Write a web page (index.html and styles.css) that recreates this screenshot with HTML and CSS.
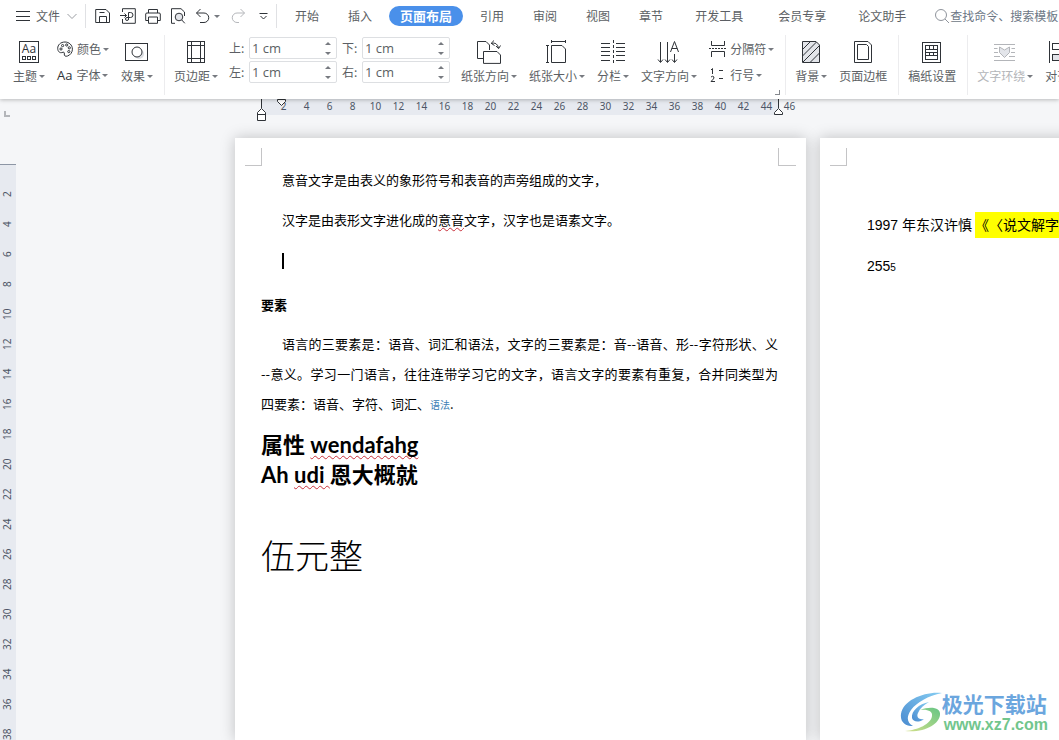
FILE: index.html
```html
<!DOCTYPE html>
<html lang="zh-CN">
<head>
<meta charset="utf-8">
<title>页面布局</title>
<link rel="stylesheet" href="styles.css">
</head>
<body>
<header class="toolbar">
  <nav class="topbar">
    <button class="file" type="button">
      <svg width="14" height="14" viewBox="0 0 14 14"><path d="M0 2.5h14M0 7.5h14M0 11.5h14"/></svg>
      文件
      <svg class="chevron" width="10" height="10" viewBox="0 0 10 10"><path d="M.5 3L5 7.500L9.500 3"/></svg>
    </button>
    <span class="rule"></span>
    <div class="quick">
      <button type="button" aria-label="保存"><svg width="16" height="16" viewBox="0 0 16 16"><path d="M.7 14.500V1.500H11L14.500 5V14.500zM4.500 14V8.500H11.500V14M4.500 4.500H9.500"/></svg></button>
      <button type="button" aria-label="输出为PDF"><svg width="16" height="16" viewBox="0 0 16 16"><path d="M2.500 4V.7H15.300V15.300H2.500V11M0 7.500H6.500M4.500 5.500L6.500 7.500L4.500 9.500M8.500 12V4.500H10.500A2.300 2.300 0 0 1 10.500 9.500H7A1.500 1.500 0 1 0 8.500 11"/></svg></button>
      <button type="button" aria-label="打印"><svg width="16" height="16" viewBox="0 0 16 16"><path d="M3.500 5V1.500H12.500V5M3.500 12.500H.7V6Q.7 5 2 5H14Q15.300 5 15.300 6V12.500H12.500M3.500 9H12.500V15.300H3.500z"/></svg></button>
      <button type="button" aria-label="打印预览"><svg width="16" height="16" viewBox="0 0 16 16"><path d="M5 15.300H1.500V.7H11L14.500 4V8"/><circle class="tint" cx="9" cy="9" r="3.800"/><path d="M11.800 12L14.800 15.300"/></svg></button>
      <button type="button" aria-label="撤销"><svg width="16" height="16" viewBox="0 0 16 16"><path d="M5.500 1L1.500 5L5.500 9M1.500 5H9A4.700 4.700 0 0 1 9 14.500H5"/></svg></button>
      <span class="caret"></span>
      <button class="redo" type="button" aria-label="恢复"><svg width="16" height="16" viewBox="0 0 16 16"><path d="M10.500 1L14.500 5L10.500 9M14.500 5H7A4.700 4.700 0 0 0 7 14.500H9"/></svg></button>
      <button class="more" type="button" aria-label="更多"><svg width="9" height="10" viewBox="0 0 9 10"><path d="M.5 2.500H8.500M1.500 5L4.500 8L7.500 5"/></svg></button>
    </div>
    <span class="rule"></span>
    <div class="tabs">
      <button type="button">开始</button>
      <button type="button">插入</button>
      <button class="active" type="button">页面布局</button>
      <button type="button">引用</button>
      <button type="button">审阅</button>
      <button type="button">视图</button>
      <button type="button">章节</button>
      <button class="wide" type="button">开发工具</button>
      <button class="wide" type="button">会员专享</button>
      <button type="button">论文助手</button>
    </div>
    <label class="search">
      <svg width="16" height="16" viewBox="0 0 16 16"><circle cx="7" cy="7" r="5.500"/><path d="M11 11L15 15"/></svg>
      <input type="text" aria-label="搜索" placeholder="查找命令、搜索模板">
    </label>
  </nav>

  <div class="ribbon">
    <button class="tool" type="button">
      <svg width="24" height="24" viewBox="0 0 24 24"><path class="crisp" d="M2.500 1.500H21.500V22.500H2.500zM5.500 16.500h3v3h-3zM10.500 16.500h3v3h-3zM15.500 16.500h3v3h-3z"/><text x="12" y="13" text-anchor="middle">Aa</text></svg>
      <span class="name">主题<i class="caret"></i></span>
    </button>
    <div class="stack">
      <button class="mini" type="button">
        <svg width="16" height="16" viewBox="0 0 16 16"><path d="M8 1C3.500 1 .7 4 .7 7.300S3 12.300 5 11.500C7 10.800 7.600 11.300 7.300 13C7 15 8.500 15.700 10.500 15C13.500 14 15.400 11.300 15.400 8.200C15.400 4 12 1 8 1z"/><circle cx="4" cy="8" r="1.100"/><circle cx="5.600" cy="4.600" r="1.100"/><circle cx="9.700" cy="4" r="1.100"/><circle cx="12.300" cy="6.800" r="1.100"/><circle cx="11.800" cy="10.600" r="1.100"/></svg>
        <span class="name">颜色<i class="caret"></i></span>
      </button>
      <button class="mini" type="button"><span class="aa">Aa</span><span class="name">字体<i class="caret"></i></span></button>
    </div>
    <button class="tool" type="button">
      <svg width="24" height="24" viewBox="0 0 24 24"><circle class="shade" cx="14" cy="14" r="5"/><path class="crisp" d="M.5 3.500H22.500V20.500H.5z"/><circle class="paper" cx="12" cy="12" r="5"/></svg>
      <span class="name">效果<i class="caret"></i></span>
    </button>
    <span class="divider"></span>
    <button class="tool" type="button">
      <svg width="24" height="24" viewBox="0 0 24 24"><path class="crisp" d="M3.500 1.500H20.500V22.500H3.500zM7.500 1.500V22.500M16.500 1.500V22.500M3.500 5.500H20.500M3.500 18.500H20.500"/></svg>
      <span class="name">页边距<i class="caret"></i></span>
    </button>
    <div class="margins">
      <label for="mt">上:</label>
      <div class="spin"><input id="mt" type="text" value="1 cm"><button type="button" aria-label="增大上边距"></button><button class="down" type="button" aria-label="减小上边距"></button></div>
      <label for="mb">下:</label>
      <div class="spin"><input id="mb" type="text" value="1 cm"><button type="button" aria-label="增大下边距"></button><button class="down" type="button" aria-label="减小下边距"></button></div>
      <label for="ml">左:</label>
      <div class="spin"><input id="ml" type="text" value="1 cm"><button type="button" aria-label="增大左边距"></button><button class="down" type="button" aria-label="减小左边距"></button></div>
      <label for="mr">右:</label>
      <div class="spin"><input id="mr" type="text" value="1 cm"><button type="button" aria-label="增大右边距"></button><button class="down" type="button" aria-label="减小右边距"></button></div>
    </div>
    <button class="tool" type="button">
      <svg width="24" height="24" viewBox="0 0 24 24"><path d="M6 18.500H.5V1.500H9L12.500 5V10M6.500 11.500H20L23.500 15V23.400H6.500zM14 3.500Q20 1.500 21.500 8M17 .5L14.200 3.300L17.500 5.500M19 6L21.600 8.700L23.500 5.500"/></svg>
      <span class="name">纸张方向<i class="caret"></i></span>
    </button>
    <button class="tool" type="button">
      <svg width="24" height="24" viewBox="0 0 24 24"><path d="M6.500 5.500H17L20.500 9V22.500H6.500zM6 1.500H21M6.500 0V3M20.500 0V3M2.500 5V23M1 5.500H4M1 22.500H4"/></svg>
      <span class="name">纸张大小<i class="caret"></i></span>
    </button>
    <button class="tool" type="button">
      <svg width="24" height="24" viewBox="0 0 24 24"><path class="crisp" d="M0 3.500H9M0 7.500H9M0 11.500H9M0 15.500H9M0 20.500H9M15 3.500H24M15 7.500H24M15 11.500H24M15 15.500H24M15 20.500H24"/><path stroke-dasharray="3 2" d="M12.500 0V24"/></svg>
      <span class="name">分栏<i class="caret"></i></span>
    </button>
    <button class="tool" type="button">
      <svg width="24" height="24" viewBox="0 0 24 24"><path d="M3.500 2V22M1 19.500L3.500 22.500L6 19.500M10.500 2V22M8 19.500L10.500 22.500L13 19.500M17.500 14V22M15 19.500L17.500 22.500L20 19.500M13.500 12L17.500 1.500L21.500 12M14.700 8.500H20.300"/></svg>
      <span class="name">文字方向<i class="caret"></i></span>
    </button>
    <div class="stack">
      <button class="mini" type="button">
        <svg width="17" height="18" viewBox="0 0 17 18"><path d="M2.500 1V5.500H15.500V1M2.500 17V11.500H15.500V17"/><path stroke-dasharray="2 1" d="M0 8.500H17"/></svg>
        <span class="name">分隔符<i class="caret"></i></span>
      </button>
      <button class="mini" type="button">
        <svg width="17" height="16" viewBox="0 0 17 16"><path d="M2 3L3.500 1.500V7M2 10Q3.500 8.500 5 10Q5.500 11.500 2 14.500H6M10 3.500H14M10 11.500H14"/></svg>
        <span class="name">行号<i class="caret"></i></span>
      </button>
    </div>
    <span class="divider"><i class="launcher"></i></span>
    <button class="tool" type="button">
      <svg width="24" height="24" viewBox="0 0 24 24"><path class="tint" d="M3.500 1.500H17L20.500 5V22.500H3.500z"/><path d="M3.500 9.500L11.500 1.500M3.500 16L17.500 2M4 22L20.500 5.500M11.500 22L20.500 13"/></svg>
      <span class="name">背景<i class="caret"></i></span>
    </button>
    <button class="tool" type="button">
      <svg width="24" height="24" viewBox="0 0 24 24"><path d="M3.500 1.500H17L20.500 5V22.500H3.500zM6.500 4.500H15.500L17.500 6.500V19.500H6.500z"/></svg>
      <span class="name">页面边框</span>
    </button>
    <span class="divider"></span>
    <button class="tool" type="button">
      <svg width="24" height="24" viewBox="0 0 24 24"><path class="crisp" d="M2.500 2.500H20.500V22.500H2.500zM5.500 5.500H17.500V9.500H5.500zM5.500 12.500H17.500V15.500H5.500zM5.500 9.500V19.500H17.500V9.500M9.500 5.500V9.500M13.500 5.500V9.500M9.500 12.500V15.500M13.500 12.500V15.500"/></svg>
      <span class="name">稿纸设置</span>
    </button>
    <span class="divider"></span>
    <button class="tool disabled" type="button" disabled>
      <svg width="24" height="24" viewBox="0 0 24 24"><path d="M1 4.500H22M1 20.500H22M1 8.500H4.500M1 12.500H5M1 16.500H7M18.500 8.500H22M18 12.500H22M16 16.500H22"/><path class="tint" d="M6.500 7L11.500 10L16.500 7V12.500L11.500 17.500L6.500 12.500z"/></svg>
      <span class="name">文字环绕<i class="caret"></i></span>
    </button>
    <button class="tool" type="button">
      <svg width="24" height="24" viewBox="0 0 24 24"><path class="crisp" d="M.5 1V23M3.500 3.500H16.500V9.500H3.500z"/><path class="crisp tint" d="M3.500 14.500H20.500V20.500H3.500z"/></svg>
      <span class="name">对齐<i class="caret"></i></span>
    </button>
  </div>
</header>

<main class="workspace">
  <aside class="side">
    <div class="corner"><svg width="7" height="7" viewBox="0 0 7 7"><path d="M2 0V5H7"/></svg></div>
    <div class="vruler">
      <span>2</span><span>4</span><span>6</span><span>8</span><span>10</span><span>12</span><span>14</span><span>16</span><span>18</span><span>20</span><span>22</span><span>24</span><span>26</span><span>28</span><span>30</span><span>32</span><span>34</span><span>36</span><span>38</span>
    </div>
  </aside>
  <section class="canvas">
    <div class="hruler">
      <div class="scale">
        <span>2</span><span>4</span><span>6</span><span>8</span><span>10</span><span>12</span><span>14</span><span>16</span><span>18</span><span>20</span><span>22</span><span>24</span><span>26</span><span>28</span><span>30</span><span>32</span><span>34</span><span>36</span><span>38</span><span>40</span><span>42</span><span>44</span><span>46</span>
        <svg class="marker left" width="10" height="23" viewBox="0 0 10 23"><path d="M4.500 0V9"/><path class="paper" d="M.5 21.500V13.500L4.500 9.500L8.500 13.500V21.500zM.5 15.500H8.500"/></svg>
        <svg class="marker first" width="10" height="9" viewBox="0 0 10 9"><path class="paper" d="M.5 .5H8.500V2.500L4.500 6.500L.5 2.500z"/></svg>
        <svg class="marker right" width="10" height="17" viewBox="0 0 10 17"><path d="M4.500 0V9"/><path class="paper" d="M.5 15.500V13.500L4.500 9.500L8.500 13.500V15.500z"/></svg>
      </div>
    </div>
    <div class="pages">
      <article class="page">
        <i class="crop start"></i><i class="crop end"></i>
        <p class="loose indent">意音文字是由表义的象形符号和表音的声旁组成的文字，</p>
        <p class="loose indent">汉字是由表形文字进化成的<u class="squiggle">意音</u>文字，汉字也是语素文字。</p>
        <p class="loose indent"><span class="cursor"></span></p>
        <h3>要素</h3>
        <p class="body">
          <span class="full indent">语言的三要素是：语音、词汇和语法，文字的三要素是：音--语音、形--字符形状、义</span>
          <span class="full">--意义。学习一门语言，往往连带学习它的文字，语言文字的要素有重复，合并同类型为</span>
          <span class="last">四要素：语音、字符、词汇、<span class="term">语法</span>.</span>
        </p>
        <h2>属性 <u class="squiggle">wendafahg</u><br>Ah <u class="squiggle">udi </u>恩大概就</h2>
        <p class="amount">伍元整</p>
      </article>
      <article class="page second">
        <i class="crop start"></i>
        <p>1997 年东汉许慎<mark>《〈说文解字》</mark></p>
        <p>255<sub>5</sub></p>
      </article>
    </div>
  </section>
</main>

<div class="brand">
  <svg width="42" height="42" viewBox="0 0 42 42">
    <defs>
      <linearGradient id="sky" x1="0" y1="1" x2="1" y2="0"><stop offset="0" stop-color="#4a8bd0"/><stop offset="1" stop-color="#86cdf2"/></linearGradient>
      <linearGradient id="leaf" x1="0" y1="1" x2="1" y2="0"><stop offset="0" stop-color="#d3e08a"/><stop offset="1" stop-color="#66c584"/></linearGradient>
    </defs>
    <path fill="url(#sky)" d="M42 1C25 -1 3 8 1 22C0 30 5 34 13 34C7 31 6 25 11 18C17 10 28 4 42 1z"/>
    <path fill="url(#sky)" d="M29 10C19 12 11 19 12 26C13 30 19 31 24 27C19 28 16 25 18 21C20 16 24 13 29 10z"/>
    <path fill="url(#leaf)" d="M20 18C30 14 41 15 40 23C39 32 25 41 5 39C18 38 31 32 32 24C33 19 27 17 20 18z"/>
  </svg>
  <div class="brand-text"><strong>极光下载站</strong><span>www.xz7.com</span></div>
</div>
</body>
</html>
```

FILE: styles.css
```css
* { box-sizing: border-box; }

body {
  margin: 0;
  height: 100vh;
  display: flex;
  flex-direction: column;
  overflow: hidden;
  background: #f5f6f8;
  color: #5c5f64;
  font: 12px/16px "Noto Sans CJK SC", sans-serif;
  text-spacing-trim: space-all;
}

button, input {
  margin: 0;
  padding: 0;
  border: 0;
  background: none;
  color: inherit;
  font: inherit;
  white-space: nowrap;
}

svg { display: block; flex: none; fill: none; stroke: #2f3338; }
svg text { fill: #2f3338; stroke: none; font: 12px "Open Sans", sans-serif; }
.crisp { shape-rendering: crispEdges; }
.tint { fill: #e3e5ea; }
.paper { fill: #fff; }
.shade { fill: #dcdee2; stroke: none; }

.toolbar {
  position: relative;
  z-index: 2;
  flex: none;
  background: #fff;
  box-shadow: 0 1px 4px rgba(0, 0, 0, .25);
}

/* Menu row */
.topbar { display: flex; align-items: center; height: 32px; padding-left: 16px; }
.file { display: flex; align-items: center; gap: 6px; margin-right: 8px; }
.chevron { margin-left: 1px; stroke: #9a9da2; }
.rule { flex: none; width: 1px; height: 24px; background: #e0e1e4; }
.quick { display: flex; align-items: center; flex: none; gap: 9px; padding: 0 8px 0 9px; }
.quick .caret { margin: 0 1px 0 -6px; }
.redo svg { stroke: #b5b7bb; }
.more { margin-left: 4px; }

.caret {
  display: inline-block;
  flex: none;
  border: 3px solid transparent;
  border-top-color: #777a80;
  border-bottom: 0;
}

.tabs { display: flex; flex: none; gap: 5px; margin-left: 6px; }
.tabs button { height: 20px; padding: 0 12px; }
.tabs .wide { padding: 0 15px; }
.tabs .active {
  padding: 0 11px;
  border-radius: 10px;
  background: #4a90ea;
  color: #fff;
  font-size: 13px;
  font-weight: bold;
}

.search { display: flex; align-items: center; flex: 1; min-width: 124px; margin-left: 16px; }
.search svg { stroke: #8f949c; }
.search input { flex: 1; min-width: 0; outline: 0; }
.search input::placeholder { color: #6d7785; opacity: 1; }

/* Ribbon */
.ribbon { display: flex; align-items: flex-start; gap: 12px; padding: 6px 0 11px 13px; }
.tool { display: flex; flex: none; flex-direction: column; align-items: center; gap: 4px; padding-top: 2px; }
.name { display: flex; align-items: center; gap: 2px; }
.stack { display: flex; flex: none; flex-direction: column; gap: 4px; }
.mini { display: flex; align-items: center; gap: 4px; height: 22px; }
.aa { color: #2f3338; font: 13px/16px "Open Sans", sans-serif; }
.divider { position: relative; flex: none; width: 1px; height: 60px; margin: -3px -3px -7px -1px; background: #ececee; }
.launcher { position: absolute; right: 6px; bottom: 0; width: 5px; height: 5px; border: solid #85888d; border-width: 0 1px 1px 0; }
.disabled { color: #b3b5b9; }
.disabled svg { stroke: #b3b5b9; }

.margins { display: grid; flex: none; grid-template-columns: 15px 88px 15px 88px; gap: 2px 5px; align-items: center; margin: -1px -1px 0; }
.spin {
  display: grid;
  grid-template-columns: 1fr 16px;
  height: 22px;
  border: 1px solid #dddfe2;
  border-radius: 2px;
}
.spin input { grid-row: 1 / 3; min-width: 0; padding-left: 2px; outline: 0; font: 13px/18px "Open Sans", sans-serif; }
.spin button { display: grid; place-items: center; }
.spin button::before { content: ""; border: 3px solid transparent; border-top: 0; border-bottom-color: #777a80; }
.spin .down::before { border-top: 3px solid #777a80; border-bottom: 0; }

/* Rulers */
.workspace { display: flex; flex: 1; min-height: 0; }
.side { flex: none; width: 16px; display: flex; flex-direction: column; overflow: hidden; }
.corner { flex: none; height: 65px; padding: 12px 0 0 3px; }
.corner svg { stroke: #b4b6ba; stroke-width: 2; }
.vruler { flex: 1; padding-top: 14px; border-top: 1px solid #8d96a5; background: #e7eaf0; }
.vruler span, .scale span { color: #4e5666; font: 10px/15px "Noto Sans", sans-serif; text-align: center; }
.vruler span { display: block; height: 30px; writing-mode: vertical-rl; transform: rotate(180deg); }

.canvas { display: flex; flex: 1; flex-direction: column; min-width: 0; overflow: hidden; }
.hruler { flex: none; padding-left: 245px; }
.scale { position: relative; z-index: 1; display: flex; width: 518px; height: 16px; padding-left: 11px; background: #e7eaf0; }
.scale span { flex: none; width: 23px; }
.marker { position: absolute; top: 0; }
.marker.left { left: -4px; }
.marker.first { left: 16px; }
.marker.right { right: -5px; }

/* Document pages */
.pages { display: flex; flex: 1; gap: 14px; padding: 23px 0 0 219px; }
.page {
  position: relative;
  flex: none;
  width: 571px;
  padding: 22px 28px 0 26px;
  background: #fff;
  box-shadow: 0 0 14px rgba(0, 0, 0, .22);
  color: #000;
  font-size: 13px;
}
.page p, .page h2, .page h3 { margin: 0; }
.crop { position: absolute; top: 10px; width: 17px; height: 18px; border: solid #c4c4c6; border-width: 0 0 1px; }
.crop.start { left: 10px; border-right-width: 1px; }
.crop.end { right: 10px; width: 18px; border-left-width: 1px; }
.page .loose { line-height: 40px; }
.indent { padding-left: 21px; }
.cursor { display: inline-block; width: 2px; height: 16px; background: #000; vertical-align: middle; }
.page h3 { padding-top: 4px; font-size: 13px; line-height: 42px; }
.body { padding-top: 3px; line-height: 30px; }
.full, .last { display: block; }
.full { text-align: justify; text-align-last: justify; white-space: nowrap; }
.term { color: #3c80b5; font-size: 10px; }
.page h2 { padding-top: 10px; font: bold 22px/30px Lato, "Noto Sans CJK SC", sans-serif; }
.amount { padding-top: 40px; font-size: 34px; font-weight: 300; line-height: 50px; }
.squiggle { text-decoration: underline wavy #c8323c 1px; text-underline-offset: 2px; text-decoration-skip-ink: none; }

.second { padding: 67px 28px 0 47px; font: 14px/41px "Liberation Sans", "Noto Sans CJK SC", sans-serif; white-space: nowrap; }
.second mark { display: inline-block; margin-left: 3px; background: #ff0; line-height: 26px; }
.second sub { font-size: 10px; vertical-align: baseline; }

/* Site badge */
.brand { position: absolute; z-index: 3; right: 11px; bottom: 6px; display: flex; align-items: center; }
.brand svg { stroke: none; }
.brand-text { display: flex; flex-direction: column; }
.brand strong { color: #6ba6de; font-size: 21px; line-height: 23px; }
.brand-text span { padding-left: 2px; color: #72c68d; font: bold 16px/19px "Liberation Sans", sans-serif; }
```
